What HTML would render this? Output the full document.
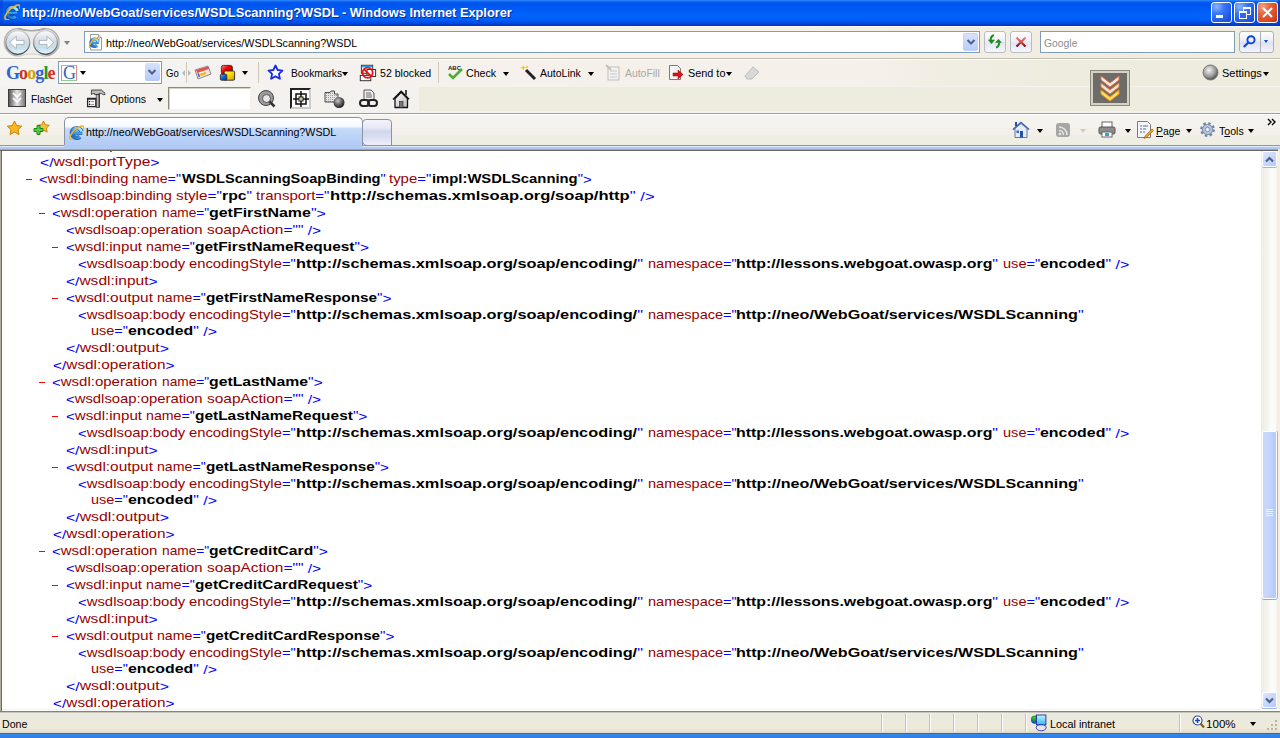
<!DOCTYPE html>
<html><head><meta charset="utf-8">
<style>
*{margin:0;padding:0;box-sizing:border-box}
html,body{width:1280px;height:738px;overflow:hidden;background:#ECE9D8;font-family:"Liberation Sans",sans-serif}
.abs{position:absolute}
.fit{position:absolute;white-space:pre;transform-origin:0 0}
.xl{position:absolute;font-size:13px;line-height:17px;white-space:pre;color:#000}
.xl b{font-weight:bold;color:#000}
.m{color:#0000FF}
.mk{position:relative;top:1px}
.t{color:#990000}
.b{color:#FF0000;font-family:"Liberation Mono",monospace;font-weight:bold}
.ui{font-size:11px;line-height:13px;color:#000}
#title{left:0;top:0;width:1280px;height:26px;background:linear-gradient(#2E8BFF 0px,#0A5CEB 2px,#0053EE 4px,#005BF5 9px,#0063FB 15px,#005DF7 20px,#004BE0 23px,#0039C8 25px,#0034BC 26px)}
.ttext{font-size:13px;line-height:16px;font-weight:bold;color:#fff;text-shadow:1px 1px 0 #0B2A9C}
.wbtn{position:absolute;top:2px;width:21px;height:21px;border:1px solid #fff;border-radius:3px;background:radial-gradient(circle at 25% 20%,#8FB4FF 0,#3A76F5 35%,#1F58E4 75%,#1845C8 100%)}
.wclose{background:radial-gradient(circle at 25% 20%,#F3A184 0,#E5643C 35%,#D9471B 75%,#B8360E 100%)}
#nav{left:0;top:26px;width:1280px;height:33px;background:linear-gradient(#FCFAF2 0,#FCFAF2 1px,transparent 1px),linear-gradient(90deg,#F4F4F3 0,#F4F3F1 200px,#F6F1EA 500px,#F6F0E8 800px,#F2EEE3 1000px,#EEEBDF 1280px)}
.addr{position:absolute;background:#fff;border:1px solid #7F9DB9}
#gtb{left:0;top:59px;width:1280px;height:27px;background:linear-gradient(#FFFFFF 0,#FFFFFF 1px,transparent 1px),linear-gradient(90deg,#F4F4F3 0,#F5F2EF 300px,#F6F0EA 600px,#F6F0EA 860px,#F0EDE2 960px,#EEEBDF 1060px)}
#ftb{left:0;top:86px;width:1280px;height:27px;background:#F4F2EE}
#tabs{left:0;top:113px;width:1280px;height:38px}
#content{left:0;top:151px;width:1261px;height:560px;background:#fff;overflow:hidden}
#status{left:0;top:711px;width:1280px;height:23px}
.sep{position:absolute;width:2px;height:18px;top:3px;border-left:1px solid #C5C2B2;border-right:1px solid #fff}
.arr{position:absolute;width:0;height:0;border-left:3.5px solid transparent;border-right:3.5px solid transparent;border-top:4px solid #000}
</style></head><body>
<svg width="0" height="0" style="position:absolute"><defs>
<linearGradient id="ieg" x1="0" y1="0" x2="0" y2="1"><stop offset="0" stop-color="#9DE6FF"/><stop offset=".5" stop-color="#3AB0F0"/><stop offset="1" stop-color="#1A70D0"/></linearGradient>
<g id="ie">
<circle cx="8.8" cy="9" r="4.9" stroke="#0D3C8C" stroke-opacity=".75" stroke-width="4.4" fill="none" stroke-dasharray="24.5 6.3" transform="rotate(50 8.8 9)"/>
<rect x="3.9" y="7.6" width="10.4" height="3.3" fill="#0D3C8C" fill-opacity=".75"/>
<circle cx="8.8" cy="9" r="4.9" stroke="url(#ieg)" stroke-width="2.8" fill="none" stroke-dasharray="24.5 6.3" transform="rotate(50 8.8 9)"/>
<rect x="4.5" y="8.2" width="9.2" height="2" fill="#30A8EE"/>
<path d="M6 15.6C2.6 16.8 0.9 14.8 2.4 11.6 4.3 7.6 8.8 3.6 12.8 2.2 15.4 1.4 16.6 2.4 15.5 5.2" stroke="#F2B422" stroke-width="1.6" fill="none"/>
</g></defs></svg>

<!-- TITLE BAR -->
<div id="title" class="abs">
  <div class="abs" style="left:0;top:0;width:3px;height:26px;background:#0B3FCB;opacity:.5"></div>
  <svg class="abs" style="left:3px;top:3px" width="17" height="17" viewBox="0 0 16 16"><use href="#ie"/></svg>
  <div class="fit ttext" style="left:22.0px;top:5.0px;;transform:scaleX(0.9839)">http://neo/WebGoat/services/WSDLScanning?WSDL - Windows Internet Explorer</div>
  <div class="wbtn" style="left:1211px"><div class="abs" style="left:4px;top:12px;width:7px;height:3px;background:#fff"></div></div>
  <div class="wbtn" style="left:1234px">
    <div class="abs" style="left:8px;top:4px;width:8px;height:8px;border:1px solid #fff;border-top-width:2px"></div>
    <div class="abs" style="left:4px;top:8px;width:8px;height:8px;border:1px solid #fff;border-top-width:2px;background:#2E67EC"></div>
  </div>
  <div class="wbtn wclose" style="left:1257px">
    <svg class="abs" style="left:3px;top:3px" width="13" height="13" viewBox="0 0 13 13"><path d="M2 2L11 11M11 2L2 11" stroke="#fff" stroke-width="2"/></svg>
  </div>
  <div class="abs" style="left:1278px;top:0;width:2px;height:26px;background:#0030B0;opacity:.6"></div>
</div>

<!-- NAV BAR -->
<div id="nav" class="abs">
  <svg class="abs" style="left:2px;top:0" width="60" height="32" viewBox="0 0 60 32">
    <defs>
      <linearGradient id="bf" x1="0" y1="0" x2="0" y2="1"><stop offset="0" stop-color="#FAFCFE"/><stop offset=".45" stop-color="#D5DCE6"/><stop offset=".7" stop-color="#C6DEEC"/><stop offset="1" stop-color="#E2F6FD"/></linearGradient>
      <linearGradient id="bs" x1="0" y1="0" x2="0" y2="1"><stop offset="0" stop-color="#D0D0D0"/><stop offset=".5" stop-color="#9A9A9A"/><stop offset="1" stop-color="#4A4A4A"/></linearGradient>
    </defs>
    <circle cx="16" cy="16.2" r="13.6" fill="#ECECEC" stroke="#B2B2B2" stroke-width="1.4"/>
    <circle cx="43.5" cy="16.2" r="13.6" fill="#ECECEC" stroke="#B2B2B2" stroke-width="1.4"/>
    <rect x="16" y="4" width="27.5" height="25" fill="#ECECEC"/>
    <path d="M16 2.6Q29.75 7 43.5 2.6" stroke="#A8A8A8" stroke-width="1.6" fill="none"/>
    <path d="M16 29.8Q29.75 26.5 43.5 29.8" stroke="#D8D8D8" stroke-width="1.2" fill="none"/>
    <circle cx="15.8" cy="16.4" r="11.9" fill="url(#bf)" stroke="url(#bs)" stroke-width="1.3"/>
    <circle cx="43.5" cy="16.4" r="11.9" fill="url(#bf)" stroke="url(#bs)" stroke-width="1.3"/>
    <path d="M7.7 16.4L14.3 10.2V14.4H22V18.4H14.3V22.8Z" fill="#fff" stroke="#A0A6AE" stroke-width=".8" stroke-linejoin="round"/>
    <path d="M51.6 16.4L45 10.2V14.4H37.3V18.4H45V22.8Z" fill="#fff" stroke="#A0A6AE" stroke-width=".8" stroke-linejoin="round"/>
  </svg>
  <div class="arr" style="left:64px;top:15px;border-top-color:#808080"></div>
  <div class="addr" style="left:84px;top:5px;width:896px;height:22px"></div>
  <svg class="abs" style="left:88px;top:8px" width="15" height="17" viewBox="0 0 15 17"><path d="M2.5 0.5h8l3 3v12.5h-11z" fill="#fff" stroke="#9A9A9A"/><path d="M10.5 0.5v3h3" fill="#EEE" stroke="#9A9A9A"/></svg><svg class="abs" style="left:88px;top:10px" width="12" height="12" viewBox="0 0 16 16"><use href="#ie"/></svg>
  <div class="fit ui" style="left:105.5px;top:11.0px;;transform:scaleX(0.9767)">http://neo/WebGoat/services/WSDLScanning?WSDL</div>
  <div class="abs" style="left:963px;top:7px;width:15px;height:18px;border-radius:2px;background:linear-gradient(#D6E2FD,#B9CDFB);border:1px solid #C1D3FB"></div>
  <svg class="abs" style="left:966px;top:12px" width="10" height="8" viewBox="0 0 10 8"><path d="M1.5 2L5 5.5 8.5 2" stroke="#4D6185" stroke-width="2" fill="none"/></svg>
  <div class="abs" style="left:984px;top:5px;width:22px;height:22px;border-radius:3px;border:1px solid #B9BCC6;background:linear-gradient(#FFFFFF,#EEEFF8 45%,#E2E5F4 55%,#F6F6FB)"></div>
  <svg class="abs" style="left:984px;top:5px" width="22" height="22" viewBox="0 0 22 22"><path d="M3.9 8.7H11.1L7.5 12.9Z" fill="#1E8A1E"/><path d="M6.6 9C6.8 6 8 4.5 10 4.2" stroke="#1E8A1E" stroke-width="2" fill="none"/><path d="M10.9 11.7H18L14.5 7.9Z" fill="#1E8A1E"/><path d="M15.3 11.5C15 14.5 14 16 12 16.5" stroke="#1E8A1E" stroke-width="2" fill="none"/></svg>
  <div class="abs" style="left:1010px;top:5px;width:22px;height:22px;border-radius:3px;border:1px solid #B9BCC6;background:linear-gradient(#FFFFFF,#EEEFF8 45%,#E2E5F4 55%,#F6F6FB)"></div>
  <svg class="abs" style="left:1010px;top:5px" width="22" height="22" viewBox="0 0 22 22"><defs><linearGradient id="xr" x1="0" y1="0" x2="0" y2="1"><stop offset="0" stop-color="#F08080"/><stop offset=".5" stop-color="#D84A4A"/><stop offset="1" stop-color="#7A0A0A"/></linearGradient></defs><path d="M6.5 6.5L15.5 15.5M15.5 6.5L6.5 15.5" stroke="url(#xr)" stroke-width="2.2"/></svg>
  <div class="addr" style="left:1040px;top:5px;width:195px;height:22px"></div>
  <div class="fit ui" style="left:1043.5px;top:11.0px;;transform:scaleX(0.9429)"><span style="color:#8D8D8D">Google</span></div>
  <div class="abs" style="left:1239px;top:5px;width:35px;height:22px;border-radius:3px;border:1px solid #ACB1BB;background:linear-gradient(#FFFFFF,#EEEFF6 40%,#DEE2F0 55%,#F4F4FA)"></div>
  <div class="abs" style="left:1260px;top:6px;width:1px;height:20px;background:#A8ADB6"></div>
  <svg class="abs" style="left:1239px;top:5px" width="22" height="22" viewBox="0 0 22 22"><circle cx="12" cy="8.8" r="3.6" stroke="#0A44E0" stroke-width="1.9" fill="none"/><path d="M9.3 11.5L4.8 16" stroke="#0A44E0" stroke-width="2.2"/></svg>
  <div class="arr" style="left:1264px;top:14px;border-top-color:#0A44E0;border-left-width:2.6px;border-right-width:2.6px;border-top-width:3px"></div>
  <div class="abs" style="left:0;top:32px;width:1280px;height:1px;background:#C0BDB0"></div>
</div>

<!-- GOOGLE TOOLBAR -->
<div id="gtb" class="abs">
  <div class="abs" style="left:6px;top:4px;font-family:'Liberation Serif',serif;font-weight:bold;font-size:18px;line-height:20px;letter-spacing:-0.9px">
    <span style="color:#2F62D6">G</span><span style="color:#D0321E">o</span><span style="color:#D2A200">o</span><span style="color:#2F62D6">g</span><span style="color:#1E9A30">l</span><span style="color:#D0321E">e</span></div>
  <div class="addr" style="left:58px;top:2px;width:104px;height:23px;background:#fff"></div>
  <div class="abs" style="left:61px;top:6px;width:16px;height:16px;border:1px solid #8FCF8F;border-left-color:#9A9AE8;border-right-color:#E08888;overflow:hidden;font-family:'Liberation Serif',serif;font-size:18px;line-height:15px;color:#3560C8;text-align:center;letter-spacing:-1px">G</div>
  <div class="arr" style="left:80px;top:12px"></div>
  <div class="abs" style="left:145px;top:4px;width:15px;height:18px;background:linear-gradient(#D6E2FD,#B5CAFA);border-radius:2px"></div>
  <svg class="abs" style="left:147px;top:9px" width="10" height="8" viewBox="0 0 10 8"><path d="M1.5 2L5 5.5 8.5 2" stroke="#4D6185" stroke-width="2" fill="none"/></svg>
  <div class="fit ui" style="left:165.5px;top:8.0px;;transform:scaleX(0.8667)">Go</div>
  <svg class="abs" style="left:182px;top:10px" width="9" height="8" viewBox="0 0 9 8"><path d="M0 4l3-3v6zM9 4L6 1v6z" fill="#B8B8B8"/></svg>
  <div class="abs" style="left:186px;top:3px;width:1px;height:21px;background:#CFC9B6"></div>
  <svg class="abs" style="left:194px;top:6px" width="18" height="15" viewBox="0 0 18 15"><path d="M1 5l13-4 3 8-13 5z" fill="#F6E8D8" stroke="#8A8A8A"/><path d="M2 5l12-3.5 1 2.5-12 4z" fill="#E85050"/><rect x="6" y="8" width="6" height="2" fill="#F4B400" transform="rotate(-18 9 9)"/><rect x="4" y="8" width="1.5" height="4" fill="#3060D0" transform="rotate(-18 5 10)"/></svg>
  <svg class="abs" style="left:219px;top:5px" width="18" height="18" viewBox="0 0 18 18"><defs><linearGradient id="cr" x1="0" y1="0" x2="1" y2="1"><stop offset="0" stop-color="#FF9090"/><stop offset=".4" stop-color="#F00000"/><stop offset="1" stop-color="#A00000"/></linearGradient><linearGradient id="cy" x1="0" y1="0" x2="1" y2="1"><stop offset="0" stop-color="#FFFFA0"/><stop offset=".4" stop-color="#FFE800"/><stop offset="1" stop-color="#D09000"/></linearGradient><linearGradient id="cb" x1="0" y1="0" x2="1" y2="1"><stop offset="0" stop-color="#70B0FF"/><stop offset=".5" stop-color="#1060E0"/><stop offset="1" stop-color="#0030A0"/></linearGradient></defs><rect x="2.4" y="1.4" width="11" height="9.2" rx="2" fill="url(#cr)" stroke="#2A2A2A" stroke-width=".9"/><rect x="5.2" y="7" width="10.4" height="9.2" rx="1.2" fill="url(#cy)" stroke="#2A2A2A" stroke-width=".9"/><rect x="1.4" y="10.2" width="6.4" height="6" rx="1" fill="url(#cb)" stroke="#2A2A2A" stroke-width=".9"/></svg>
  <div class="arr" style="left:242px;top:12px"></div>
  <div class="abs" style="left:258px;top:3px;width:1px;height:21px;background:#CFC9B6"></div>
  <svg class="abs" style="left:267px;top:5px" width="17" height="17" viewBox="0 0 17 17"><path d="M8.5 1.5l2.1 4.5 4.9.6-3.6 3.3 1 4.9-4.4-2.4-4.4 2.4 1-4.9-3.6-3.3 4.9-.6z" fill="#fff" stroke="#1A2BE8" stroke-width="1.8" stroke-linejoin="round"/></svg>
  <div class="fit ui" style="left:290.6px;top:8.0px;;transform:scaleX(0.9273)">Bookmarks</div>
  <div class="arr" style="left:342px;top:13px"></div>
  <svg class="abs" style="left:358px;top:5px" width="20" height="18" viewBox="0 0 20 18"><rect x="3.4" y="1.3" width="11.3" height="8" fill="#fff" stroke="#333" stroke-width="1"/><rect x="3.9" y="1.8" width="10.3" height="1.5" fill="#2AA0F0"/><rect x="9" y="5.5" width="8.6" height="7" fill="#fff" stroke="#333" stroke-width="1"/><rect x="2.3" y="11.4" width="10.5" height="5.3" fill="#fff" stroke="#333" stroke-width="1"/><circle cx="9.6" cy="8.7" r="5.1" stroke="#F01010" stroke-width="1.8" fill="none"/><path d="M6 5.1L13.2 12.3" stroke="#F01010" stroke-width="1.8"/></svg>
  <div class="fit ui" style="left:379.7px;top:8.0px;;transform:scaleX(0.9623)">52 blocked</div>
  <div class="abs" style="left:438px;top:3px;width:1px;height:21px;background:#CFC9B6"></div>
  <svg class="abs" style="left:447px;top:5px" width="17" height="17" viewBox="0 0 17 17"><text x="1" y="6" font-family="Liberation Sans" font-size="6" font-weight="bold" fill="#222">ABC</text><path d="M2 10l4 4 9-9" stroke="#4CAF30" stroke-width="2.6" fill="none"/></svg>
  <div class="fit ui" style="left:466.4px;top:8.0px;;transform:scaleX(0.9677)">Check</div>
  <div class="arr" style="left:503px;top:13px"></div>
  <svg class="abs" style="left:520px;top:5px" width="17" height="17" viewBox="0 0 17 17"><path d="M6 6l9 9" stroke="#222" stroke-width="3"/><path d="M3 1l1 2 2 .5-2 1-.5 2-1-2-2-.5 2-1z" fill="#F4C400"/><circle cx="7" cy="3" r="1" fill="#F4C400"/></svg>
  <div class="fit ui" style="left:540.0px;top:8.0px;;transform:scaleX(0.9535)">AutoLink</div>
  <div class="arr" style="left:588px;top:13px"></div>
  <svg class="abs" style="left:605px;top:5px" width="16" height="17" viewBox="0 0 16 17"><rect x="3" y="3" width="11" height="13" fill="#F2F2F0" stroke="#BDBDBD"/><path d="M5 7h7M5 10h7M5 13h7" stroke="#C8C8C8"/><path d="M1 1l5 5" stroke="#C0C0C0" stroke-width="2"/></svg>
  <div class="fit ui" style="left:624.7px;top:8.0px;;transform:scaleX(0.9459)"><span style="color:#A8A8A8">AutoFill</span></div>
  <svg class="abs" style="left:668px;top:5px" width="17" height="17" viewBox="0 0 17 17"><path d="M1.5 1.5h8l3 3v11h-11z" fill="#F6F6F6" stroke="#7A7A7A"/><path d="M5 9h5V6l5 4.5-5 4.5v-3H5z" fill="#E0101A" stroke="#900" stroke-width=".5"/></svg>
  <div class="fit ui" style="left:687.6px;top:8.0px;;transform:scaleX(0.9868)">Send to</div>
  <div class="arr" style="left:726px;top:13px"></div>
  <svg class="abs" style="left:744px;top:6px" width="16" height="15" viewBox="0 0 16 15"><path d="M1 11l8-9 6 5-7 7H3z" fill="#D8D8D8" stroke="#BCBCBC"/></svg>
  <!-- right -->
  <svg class="abs" style="left:1202px;top:5px" width="17" height="17" viewBox="0 0 17 17"><defs><radialGradient id="sg" cx="40%" cy="35%" r="60%"><stop offset="0" stop-color="#F4F4F4"/><stop offset=".7" stop-color="#9A9A9A"/><stop offset="1" stop-color="#5E5E5E"/></radialGradient></defs><circle cx="8.5" cy="8.5" r="7.5" fill="url(#sg)" stroke="#777"/></svg>
  <div class="fit ui" style="left:1222.0px;top:8.0px;;transform:scaleX(1.0000)">Settings</div>
  <div class="arr" style="left:1263px;top:13px"></div>
</div>

<!-- FLASHGET TOOLBAR -->
<div id="ftb" class="abs">
  <div class="abs" style="left:419px;top:1px;width:861px;height:24px;background:#EEEBDF"></div>
  <div class="abs" style="left:8px;top:3px;width:18px;height:18px;background:linear-gradient(90deg,#5A5A5A,#E6E6E6 50%,#7A7A7A);border:1px solid #3C3C3C"></div>
  <svg class="abs" style="left:11px;top:6px" width="12" height="12" viewBox="0 0 12 12"><path d="M2 1l4 4 4-4M2 6l4 4 4-4" stroke="#fff" stroke-width="1.6" fill="none"/></svg>
  <div class="fit ui" style="left:30.5px;top:7.0px;;transform:scaleX(0.9222)">FlashGet</div>
  <svg class="abs" style="left:84px;top:0" width="26" height="26" viewBox="0 0 26 26"><defs><linearGradient id="hm" x1="0" y1="0" x2="1" y2="0"><stop offset="0" stop-color="#F4F4F4"/><stop offset=".5" stop-color="#A8A8A8"/><stop offset="1" stop-color="#3A3A3A"/></linearGradient></defs>
  <path d="M7.5 4H17.5L21 7.3V8.6H19.2L17.6 7.6H14.8V8.6H10.6V7.6H8.8L7.3 8.6Z" fill="#BDBDBD" stroke="#2A2A2A" stroke-width=".8" stroke-linejoin="round"/>
  <rect x="12.2" y="8.6" width="3.4" height="12.8" fill="url(#hm)" stroke="#222" stroke-width=".7"/>
  <rect x="3.6" y="12.4" width="8.2" height="8.2" fill="#fff" stroke="#262626" stroke-width="1.3"/>
  <rect x="3.6" y="12.4" width="8.2" height="1.3" fill="#262626"/>
  <circle cx="5.6" cy="15.6" r=".8" fill="#111"/><circle cx="5.6" cy="18.4" r=".8" fill="#111"/>
  <path d="M7.2 15.6H10M7.2 18.4H10" stroke="#777" stroke-width=".9"/></svg>
  <div class="fit ui" style="left:109.7px;top:7.0px;;transform:scaleX(0.9474)">Options</div>
  <div class="arr" style="left:157px;top:12px"></div>
  <div class="abs" style="left:168px;top:1px;width:83px;height:23px;background:#fff;border:1px solid;border-color:#8E8B7C #F6F4EA #F6F4EA #8E8B7C;box-shadow:inset 1px 1px 0 #D6D3C6"></div>
  <svg class="abs" style="left:257px;top:3px" width="20" height="20" viewBox="0 0 20 20"><circle cx="9" cy="9" r="7.5" fill="#9A9A9A" stroke="#444"/><circle cx="9.5" cy="9.5" r="4" fill="#E8E8E8" stroke="#555"/><path d="M12.5 12.5l5 5" stroke="#333" stroke-width="2.5"/></svg>
  <div class="abs" style="left:290px;top:2px;width:21px;height:21px;background:#fff;border:2px solid #222;border-right-color:#ccc;border-bottom-color:#ccc"></div>
  <svg class="abs" style="left:293px;top:5px" width="16" height="16" viewBox="0 0 16 16"><rect x="3" y="3" width="10" height="10" fill="none" stroke="#111" stroke-width="1.5"/><path d="M8 0v16M0 8h16" stroke="#111" stroke-width="1.5"/><rect x="6" y="6" width="4" height="4" fill="#fff" stroke="#111"/><rect x="7.2" y="7.2" width="1.6" height="1.6" fill="#C8A000"/></svg>
  <svg class="abs" style="left:324px;top:3px" width="22" height="20" viewBox="0 0 22 20"><defs><radialGradient id="gl" cx="40%" cy="35%" r="65%"><stop offset="0" stop-color="#C8C8C8"/><stop offset=".6" stop-color="#5A5A5A"/><stop offset="1" stop-color="#222"/></radialGradient><pattern id="ht" width="2" height="2" patternUnits="userSpaceOnUse"><rect width="2" height="2" fill="#E6E6E6"/><rect width="1" height="1" fill="#9A9A9A"/></pattern></defs><path d="M1 3.5H6L7 2H10.5V5H14V13H1Z" fill="url(#ht)" stroke="#3A3A3A" stroke-width=".9" stroke-linejoin="round"/><circle cx="15" cy="13.5" r="5.5" fill="url(#gl)"/></svg>
  <svg class="abs" style="left:359px;top:3px" width="20" height="20" viewBox="0 0 20 20"><path d="M5 1h7l3 3v7H5z" fill="#F0F0F0" stroke="#555"/><path d="M7 4h5M7 6h6M7 8h6" stroke="#666"/><rect x="1" y="11" width="9" height="6" rx="3" fill="none" stroke="#222" stroke-width="2"/><rect x="9" y="11" width="9" height="6" rx="3" fill="none" stroke="#222" stroke-width="2"/></svg>
  <svg class="abs" style="left:392px;top:3px" width="18" height="20" viewBox="0 0 18 20"><defs><linearGradient id="hs" x1="0" y1="0" x2="1" y2="1"><stop offset="0" stop-color="#FFFFFF"/><stop offset="1" stop-color="#B8B8B8"/></linearGradient></defs><path d="M3 9.5V18.5H15.5V9.5L9.2 3.2Z" fill="url(#hs)" stroke="#111" stroke-width="1.3" stroke-linejoin="round"/><path d="M1 10.5L9.2 2.3 17 10.3" stroke="#111" stroke-width="1.5" fill="none"/><rect x="13" y="1" width="2" height="5.5" fill="#444"/><rect x="7.5" y="12.5" width="3.5" height="6" fill="#777" stroke="#222" stroke-width=".6"/></svg>
  <!-- flashget logo -->
  <div class="abs" style="left:1091px;top:-15px;width:38px;height:34px;background:#6E6C68;border:2px solid #D4D0C4;outline:1px solid #8E8B80"></div>
  <svg class="abs" style="left:1098px;top:-12px" width="24" height="28" viewBox="0 0 24 28"><path d="M3 2l9 7 9-7v4l-9 7-9-7z" fill="#FBE8E0" stroke="#E07050"/><path d="M3 9l9 7 9-7v4l-9 7-9-7z" fill="#FBE0D0" stroke="#E08040"/><path d="M3 16l9 7 9-7v4l-9 7-9-7z" fill="#F8E060" stroke="#F09020"/></svg>
</div>

<!-- TAB BAR -->
<div id="tabs" class="abs">
  <div class="abs" style="left:0;top:0;width:1280px;height:1px;background:#A5A08E"></div>
  <div class="abs" style="left:0;top:1px;width:1280px;height:1px;background:#FFFFFF"></div>
  <div class="abs" style="left:0;top:2px;width:1280px;height:30px;background:linear-gradient(#F5F3EE 0,#F5F3EE 13px,#F5EFE9 13px,#F5EFE9 20px,#EFEEE6 20px,#EFEEE6 27px,#F0EEE1 27px)"></div>
  <svg class="abs" style="left:6px;top:7px" width="17" height="16" viewBox="0 0 17 16"><path d="M8.5 1l2.2 4.6 5 .6-3.7 3.4 1 5-4.5-2.5-4.5 2.5 1-5L1.3 6.2l5-.6z" fill="#F8B820" stroke="#C88400" stroke-linejoin="round"/></svg>
  <svg class="abs" style="left:33px;top:7px" width="17" height="16" viewBox="0 0 17 16"><path d="M10.5 1l1.8 3.8 4 .5-3 2.8.8 4-3.6-2-3.6 2 .8-4-3-2.8 4-.5z" fill="#F8C040" stroke="#C88400" stroke-linejoin="round"/><path d="M4 5.5h3v3h3v3H7v3H4v-3H1v-3h3z" fill="#58C848" stroke="#1C8A10"/></svg>
  <div class="abs" style="left:0;top:32px;width:1280px;height:1px;background:#8F97A8"></div>

  <!-- right tools -->
  <svg class="abs" style="left:1012px;top:8px" width="18" height="17" viewBox="0 0 18 17"><path d="M1 8.5L9 1.5l8 7" stroke="#3C5FA8" stroke-width="1.6" fill="#9DB9E8"/><path d="M3 7.5v9h12v-9L9 2.5z" fill="#E4ECF8" stroke="#5A78B0"/><rect x="8" y="10" width="3" height="6.5" fill="#2A50A8"/><rect x="4.5" y="9.5" width="2.5" height="2.5" fill="#3A66C8"/><rect x="3" y="1" width="2" height="4" fill="#2A50A8"/></svg>
  <div class="arr" style="left:1037px;top:16px"></div>
  <div class="abs" style="left:1056px;top:10px;width:14px;height:14px;border-radius:3px;background:#A6A6A2"></div>
  <svg class="abs" style="left:1058px;top:12.5px" width="10" height="10" viewBox="0 0 10 10"><circle cx="2" cy="8" r="1.3" fill="#E8E8E8"/><path d="M1 4.5a4.5 4.5 0 0 1 4.5 4.5M1 1a8 8 0 0 1 8 8" stroke="#E8E8E8" stroke-width="1.5" fill="none"/></svg>
  <div class="arr" style="left:1080px;top:16px;border-top-color:#CFCCC2"></div>
  <svg class="abs" style="left:1098px;top:8px" width="18" height="17" viewBox="0 0 18 17"><rect x="4" y="1" width="10" height="6" fill="#fff" stroke="#666"/><rect x="1" y="6" width="16" height="7" rx="1.5" fill="#8C8C8C" stroke="#555"/><rect x="4" y="11" width="10" height="5" fill="#fff" stroke="#666"/><rect x="7" y="12" width="4" height="3" fill="#36A0D8"/></svg>
  <div class="arr" style="left:1125px;top:16px"></div>
  <svg class="abs" style="left:1136px;top:7px" width="18" height="19" viewBox="0 0 18 19"><path d="M1.5 1.5h10l3 3V17.5h-13z" fill="#F6F6F6" stroke="#7A7A7A"/><path d="M4 6h2M7 6h5M4 9h2M7 9h3M4 12h2M7 12h2" stroke="#4A6AB0"/><path d="M9 16l7-7 1.5 1.5-7 7-2.5 1z" fill="#F0A020" stroke="#8A5A10" stroke-width=".6"/></svg>
  <div class="fit ui" style="left:1156.4px;top:12.0px;;transform:scaleX(0.9423)"><u>P</u>age</div>
  <div class="arr" style="left:1186px;top:16px"></div>
  <svg class="abs" style="left:1199px;top:8px" width="17" height="17" viewBox="0 0 17 17"><circle cx="8.5" cy="8.5" r="5.8" fill="#A9BCD6" stroke="#6F86A8" stroke-width="3.2" stroke-dasharray="2.3 2.25"/><circle cx="8.5" cy="8.5" r="5" fill="#B8C8DE" stroke="#7990B2"/><circle cx="8.5" cy="8.5" r="2.2" fill="#EEF2F8" stroke="#7990B2"/></svg>
  <div class="fit ui" style="left:1218.8px;top:12.0px;;transform:scaleX(0.9615)">T<u>o</u>ols</div>
  <div class="arr" style="left:1248px;top:16px"></div>
  <svg class="abs" style="left:1267px;top:5px" width="10" height="8" viewBox="0 0 10 8"><path d="M1 1l3 3-3 3M5 1l3 3-3 3" stroke="#000" stroke-width="1.4" fill="none"/></svg>
  <div class="abs" style="left:0;top:33px;width:1280px;height:1px;background:#E0E9FB"></div>
  <div class="abs" style="left:0;top:34px;width:1280px;height:2px;background:#B3C8F3"></div>
  <div class="abs" style="left:0;top:36px;width:1278px;height:1px;background:#ABA892"></div>
  <div class="abs" style="left:0;top:37px;width:1278px;height:1px;background:#6E6B5E"></div>
  <div class="abs" style="left:362px;top:6px;width:30px;height:27px;border:1px solid #8A93A4;border-radius:4px 4px 0 5px;background:linear-gradient(#F4F3FC,#E8E9F6 30%,#D2D7EC 45%,#DCDFF2 70%,#F0F0FA)"></div>
  <div class="abs" style="left:64px;top:4px;width:299px;height:29px;border:1px solid #8A93A4;border-bottom:none;border-radius:5px 5px 0 0;background:linear-gradient(#FFFFFF 0,#F4F8FF 9px,#C9DDFA 10px,#BCD4F8 60%,#B3CBF6 100%)"></div>
  <div class="abs" style="left:64px;top:32px;width:298px;height:4px;background:#B1C9F5"></div>
  <svg class="abs" style="left:68px;top:11px" width="16" height="16" viewBox="0 0 16 16"><use href="#ie"/></svg>
  <div class="fit ui" style="left:86.0px;top:13.0px;;transform:scaleX(0.9728)">http://neo/WebGoat/services/WSDLScanning?WSDL</div>
</div>

<!-- CONTENT -->
<div id="content" class="abs">
  <div class="abs" style="left:0;top:0;width:1px;height:560px;background:#B2AF9E"></div>
  <div class="abs" style="left:1px;top:0;width:1px;height:560px;background:#716B5D"></div>
  <div class="abs" style="left:0;top:0;width:1261px;height:560px;transform:translateY(-151px)">
<div class="fit xl" style="left:39.5px;top:153px;;transform:scaleX(1.2071)"><span class="m mk">&lt;</span><span class="m mk">/</span><span class="t">wsdl:portType</span><span class="m mk">&gt;</span></div>
<div class="abs" style="left:26px;top:179px;width:6px;height:1px;background:#f00;transform:translateX(0px)"></div>
<div class="fit xl" style="left:38.5px;top:170px;;transform:scaleX(1.1295)"><span class="m mk">&lt;</span><span class="t">wsdl:binding</span> </div>
<div class="fit xl" style="left:132.25px;top:170px;;transform:scaleX(1.0944)"><span class="t">name</span><span class="m">="</span></div>
<div class="fit xl" style="left:181.5px;top:170px;;transform:scaleX(1.1216)"><b>WSDLScanningSoapBinding</b><span class="m">"</span> </div>
<div class="fit xl" style="left:389.0px;top:170px;;transform:scaleX(1.1486)"><span class="t">type</span><span class="m">="</span></div>
<div class="fit xl" style="left:431.5px;top:170px;;transform:scaleX(1.1393)"><b>impl:WSDLScanning</b><span class="m">"</span><span class="m mk">&gt;</span></div>
<div class="fit xl" style="left:52.0px;top:187px;;transform:scaleX(1.1171)"><span class="m mk">&lt;</span><span class="t">wsdlsoap:binding</span> </div>
<div class="fit xl" style="left:176.0px;top:187px;;transform:scaleX(1.1795)"><span class="t">style</span><span class="m">="</span></div>
<div class="fit xl" style="left:222.0px;top:187px;;transform:scaleX(1.2143)"><b>rpc</b><span class="m">"</span> </div>
<div class="fit xl" style="left:256.0px;top:187px;;transform:scaleX(1.1562)"><span class="t">transport</span><span class="m">="</span></div>
<div class="fit xl" style="left:330.0px;top:187px;;transform:scaleX(1.2768)"><b>http://schemas.xmlsoap.org/soap/http</b><span class="m">"</span> <span class="m mk">/</span><span class="m mk">&gt;</span></div>
<div class="abs" style="left:26px;top:213px;width:6px;height:1px;background:#f00;transform:translateX(13px)"></div>
<div class="fit xl" style="left:52.0px;top:204px;;transform:scaleX(1.1526)"><span class="m mk">&lt;</span><span class="t">wsdl:operation</span> </div>
<div class="fit xl" style="left:161.5px;top:204px;;transform:scaleX(1.0556)"><span class="t">name</span><span class="m">="</span></div>
<div class="fit xl" style="left:209.0px;top:204px;;transform:scaleX(1.2263)"><b>getFirstName</b><span class="m">"</span><span class="m mk">&gt;</span></div>
<div class="fit xl" style="left:66.0px;top:221px;;transform:scaleX(1.1423)"><span class="m mk">&lt;</span><span class="t">wsdlsoap:operation</span> </div>
<div class="fit xl" style="left:206.5px;top:221px;;transform:scaleX(1.1875)"><span class="t">soapAction</span><span class="m">=""</span> <span class="m mk">/</span><span class="m mk">&gt;</span></div>
<div class="abs" style="left:26px;top:247px;width:6px;height:1px;background:#f00;transform:translateX(26px)"></div>
<div class="fit xl" style="left:65.7px;top:238px;;transform:scaleX(1.1623)"><span class="m mk">&lt;</span><span class="t">wsdl:input</span> </div>
<div class="fit xl" style="left:145.9px;top:238px;;transform:scaleX(1.0911)"><span class="t">name</span><span class="m">="</span></div>
<div class="fit xl" style="left:195.0px;top:238px;;transform:scaleX(1.1871)"><b>getFirstNameRequest</b><span class="m">"</span><span class="m mk">&gt;</span></div>
<div class="fit xl" style="left:78.4px;top:255px;;transform:scaleX(1.1443)"><span class="m mk">&lt;</span><span class="t">wsdlsoap:body</span> </div>
<div class="fit xl" style="left:189.4px;top:255px;;transform:scaleX(1.1372)"><span class="t">encodingStyle</span><span class="m">="</span></div>
<div class="fit xl" style="left:296.3px;top:255px;;transform:scaleX(1.2561)"><b>http://schemas.xmlsoap.org/soap/encoding/</b><span class="m">"</span> </div>
<div class="fit xl" style="left:648.0px;top:255px;;transform:scaleX(1.1165)"><span class="t">namespace</span><span class="m">="</span></div>
<div class="fit xl" style="left:736.2px;top:255px;;transform:scaleX(1.2239)"><b>http://lessons.webgoat.owasp.org</b><span class="m">"</span> </div>
<div class="fit xl" style="left:1003.0px;top:255px;;transform:scaleX(1.1212)"><span class="t">use</span><span class="m">="</span></div>
<div class="fit xl" style="left:1040.0px;top:255px;;transform:scaleX(1.2233)"><b>encoded</b><span class="m">"</span> <span class="m mk">/</span><span class="m mk">&gt;</span></div>
<div class="fit xl" style="left:65.7px;top:272px;;transform:scaleX(1.1948)"><span class="m mk">&lt;</span><span class="m mk">/</span><span class="t">wsdl:input</span><span class="m mk">&gt;</span></div>
<div class="abs" style="left:26px;top:298px;width:6px;height:1px;background:#f00;transform:translateX(26px)"></div>
<div class="fit xl" style="left:65.7px;top:289px;;transform:scaleX(1.1857)"><span class="m mk">&lt;</span><span class="t">wsdl:output</span> </div>
<div class="fit xl" style="left:157.0px;top:289px;;transform:scaleX(1.0889)"><span class="t">name</span><span class="m">="</span></div>
<div class="fit xl" style="left:206.0px;top:289px;;transform:scaleX(1.1783)"><b>getFirstNameResponse</b><span class="m">"</span><span class="m mk">&gt;</span></div>
<div class="fit xl" style="left:78.4px;top:306px;;transform:scaleX(1.1443)"><span class="m mk">&lt;</span><span class="t">wsdlsoap:body</span> </div>
<div class="fit xl" style="left:189.4px;top:306px;;transform:scaleX(1.1372)"><span class="t">encodingStyle</span><span class="m">="</span></div>
<div class="fit xl" style="left:296.3px;top:306px;;transform:scaleX(1.2561)"><b>http://schemas.xmlsoap.org/soap/encoding/</b><span class="m">"</span> </div>
<div class="fit xl" style="left:648.0px;top:306px;;transform:scaleX(1.1165)"><span class="t">namespace</span><span class="m">="</span></div>
<div class="fit xl" style="left:736.2px;top:306px;;transform:scaleX(1.2404)"><b>http://neo/WebGoat/services/WSDLScanning</b><span class="m">"</span></div>
<div class="fit xl" style="left:91.3px;top:322px;;transform:scaleX(1.1121)"><span class="t">use</span><span class="m">="</span></div>
<div class="fit xl" style="left:128.0px;top:322px;;transform:scaleX(1.2192)"><b>encoded</b><span class="m">"</span> <span class="m mk">/</span><span class="m mk">&gt;</span></div>
<div class="fit xl" style="left:65.9px;top:339px;;transform:scaleX(1.2176)"><span class="m mk">&lt;</span><span class="m mk">/</span><span class="t">wsdl:output</span><span class="m mk">&gt;</span></div>
<div class="fit xl" style="left:52.75px;top:356px;;transform:scaleX(1.1830)"><span class="m mk">&lt;</span><span class="m mk">/</span><span class="t">wsdl:operation</span><span class="m mk">&gt;</span></div>
<div class="abs" style="left:26px;top:382px;width:6px;height:1px;background:#f00;transform:translateX(13px)"></div>
<div class="fit xl" style="left:52.0px;top:373px;;transform:scaleX(1.1526)"><span class="m mk">&lt;</span><span class="t">wsdl:operation</span> </div>
<div class="fit xl" style="left:161.5px;top:373px;;transform:scaleX(1.0556)"><span class="t">name</span><span class="m">="</span></div>
<div class="fit xl" style="left:209.0px;top:373px;;transform:scaleX(1.2128)"><b>getLastName</b><span class="m">"</span><span class="m mk">&gt;</span></div>
<div class="fit xl" style="left:66.0px;top:390px;;transform:scaleX(1.1423)"><span class="m mk">&lt;</span><span class="t">wsdlsoap:operation</span> </div>
<div class="fit xl" style="left:206.5px;top:390px;;transform:scaleX(1.1875)"><span class="t">soapAction</span><span class="m">=""</span> <span class="m mk">/</span><span class="m mk">&gt;</span></div>
<div class="abs" style="left:26px;top:416px;width:6px;height:1px;background:#f00;transform:translateX(26px)"></div>
<div class="fit xl" style="left:65.7px;top:407px;;transform:scaleX(1.1623)"><span class="m mk">&lt;</span><span class="t">wsdl:input</span> </div>
<div class="fit xl" style="left:145.9px;top:407px;;transform:scaleX(1.0911)"><span class="t">name</span><span class="m">="</span></div>
<div class="fit xl" style="left:195.0px;top:407px;;transform:scaleX(1.1876)"><b>getLastNameRequest</b><span class="m">"</span><span class="m mk">&gt;</span></div>
<div class="fit xl" style="left:78.4px;top:424px;;transform:scaleX(1.1443)"><span class="m mk">&lt;</span><span class="t">wsdlsoap:body</span> </div>
<div class="fit xl" style="left:189.4px;top:424px;;transform:scaleX(1.1372)"><span class="t">encodingStyle</span><span class="m">="</span></div>
<div class="fit xl" style="left:296.3px;top:424px;;transform:scaleX(1.2561)"><b>http://schemas.xmlsoap.org/soap/encoding/</b><span class="m">"</span> </div>
<div class="fit xl" style="left:648.0px;top:424px;;transform:scaleX(1.1165)"><span class="t">namespace</span><span class="m">="</span></div>
<div class="fit xl" style="left:736.2px;top:424px;;transform:scaleX(1.2239)"><b>http://lessons.webgoat.owasp.org</b><span class="m">"</span> </div>
<div class="fit xl" style="left:1003.0px;top:424px;;transform:scaleX(1.1212)"><span class="t">use</span><span class="m">="</span></div>
<div class="fit xl" style="left:1040.0px;top:424px;;transform:scaleX(1.2233)"><b>encoded</b><span class="m">"</span> <span class="m mk">/</span><span class="m mk">&gt;</span></div>
<div class="fit xl" style="left:65.7px;top:441px;;transform:scaleX(1.1948)"><span class="m mk">&lt;</span><span class="m mk">/</span><span class="t">wsdl:input</span><span class="m mk">&gt;</span></div>
<div class="abs" style="left:26px;top:467px;width:6px;height:1px;background:#f00;transform:translateX(26px)"></div>
<div class="fit xl" style="left:65.7px;top:458px;;transform:scaleX(1.1857)"><span class="m mk">&lt;</span><span class="t">wsdl:output</span> </div>
<div class="fit xl" style="left:157.0px;top:458px;;transform:scaleX(1.0889)"><span class="t">name</span><span class="m">="</span></div>
<div class="fit xl" style="left:206.0px;top:458px;;transform:scaleX(1.1731)"><b>getLastNameResponse</b><span class="m">"</span><span class="m mk">&gt;</span></div>
<div class="fit xl" style="left:78.4px;top:475px;;transform:scaleX(1.1443)"><span class="m mk">&lt;</span><span class="t">wsdlsoap:body</span> </div>
<div class="fit xl" style="left:189.4px;top:475px;;transform:scaleX(1.1372)"><span class="t">encodingStyle</span><span class="m">="</span></div>
<div class="fit xl" style="left:296.3px;top:475px;;transform:scaleX(1.2561)"><b>http://schemas.xmlsoap.org/soap/encoding/</b><span class="m">"</span> </div>
<div class="fit xl" style="left:648.0px;top:475px;;transform:scaleX(1.1165)"><span class="t">namespace</span><span class="m">="</span></div>
<div class="fit xl" style="left:736.2px;top:475px;;transform:scaleX(1.2404)"><b>http://neo/WebGoat/services/WSDLScanning</b><span class="m">"</span></div>
<div class="fit xl" style="left:91.3px;top:491px;;transform:scaleX(1.1121)"><span class="t">use</span><span class="m">="</span></div>
<div class="fit xl" style="left:128.0px;top:491px;;transform:scaleX(1.2192)"><b>encoded</b><span class="m">"</span> <span class="m mk">/</span><span class="m mk">&gt;</span></div>
<div class="fit xl" style="left:65.9px;top:508px;;transform:scaleX(1.2176)"><span class="m mk">&lt;</span><span class="m mk">/</span><span class="t">wsdl:output</span><span class="m mk">&gt;</span></div>
<div class="fit xl" style="left:52.75px;top:525px;;transform:scaleX(1.1830)"><span class="m mk">&lt;</span><span class="m mk">/</span><span class="t">wsdl:operation</span><span class="m mk">&gt;</span></div>
<div class="abs" style="left:26px;top:551px;width:6px;height:1px;background:#f00;transform:translateX(13px)"></div>
<div class="fit xl" style="left:52.0px;top:542px;;transform:scaleX(1.1526)"><span class="m mk">&lt;</span><span class="t">wsdl:operation</span> </div>
<div class="fit xl" style="left:161.5px;top:542px;;transform:scaleX(1.0556)"><span class="t">name</span><span class="m">="</span></div>
<div class="fit xl" style="left:209.0px;top:542px;;transform:scaleX(1.2020)"><b>getCreditCard</b><span class="m">"</span><span class="m mk">&gt;</span></div>
<div class="fit xl" style="left:66.0px;top:559px;;transform:scaleX(1.1423)"><span class="m mk">&lt;</span><span class="t">wsdlsoap:operation</span> </div>
<div class="fit xl" style="left:206.5px;top:559px;;transform:scaleX(1.1875)"><span class="t">soapAction</span><span class="m">=""</span> <span class="m mk">/</span><span class="m mk">&gt;</span></div>
<div class="abs" style="left:26px;top:585px;width:6px;height:1px;background:#f00;transform:translateX(26px)"></div>
<div class="fit xl" style="left:65.7px;top:576px;;transform:scaleX(1.1623)"><span class="m mk">&lt;</span><span class="t">wsdl:input</span> </div>
<div class="fit xl" style="left:145.9px;top:576px;;transform:scaleX(1.0911)"><span class="t">name</span><span class="m">="</span></div>
<div class="fit xl" style="left:195.0px;top:576px;;transform:scaleX(1.1800)"><b>getCreditCardRequest</b><span class="m">"</span><span class="m mk">&gt;</span></div>
<div class="fit xl" style="left:78.4px;top:593px;;transform:scaleX(1.1443)"><span class="m mk">&lt;</span><span class="t">wsdlsoap:body</span> </div>
<div class="fit xl" style="left:189.4px;top:593px;;transform:scaleX(1.1372)"><span class="t">encodingStyle</span><span class="m">="</span></div>
<div class="fit xl" style="left:296.3px;top:593px;;transform:scaleX(1.2561)"><b>http://schemas.xmlsoap.org/soap/encoding/</b><span class="m">"</span> </div>
<div class="fit xl" style="left:648.0px;top:593px;;transform:scaleX(1.1165)"><span class="t">namespace</span><span class="m">="</span></div>
<div class="fit xl" style="left:736.2px;top:593px;;transform:scaleX(1.2239)"><b>http://lessons.webgoat.owasp.org</b><span class="m">"</span> </div>
<div class="fit xl" style="left:1003.0px;top:593px;;transform:scaleX(1.1212)"><span class="t">use</span><span class="m">="</span></div>
<div class="fit xl" style="left:1040.0px;top:593px;;transform:scaleX(1.2233)"><b>encoded</b><span class="m">"</span> <span class="m mk">/</span><span class="m mk">&gt;</span></div>
<div class="fit xl" style="left:65.7px;top:610px;;transform:scaleX(1.1948)"><span class="m mk">&lt;</span><span class="m mk">/</span><span class="t">wsdl:input</span><span class="m mk">&gt;</span></div>
<div class="abs" style="left:26px;top:636px;width:6px;height:1px;background:#f00;transform:translateX(26px)"></div>
<div class="fit xl" style="left:65.7px;top:627px;;transform:scaleX(1.1857)"><span class="m mk">&lt;</span><span class="t">wsdl:output</span> </div>
<div class="fit xl" style="left:157.0px;top:627px;;transform:scaleX(1.0889)"><span class="t">name</span><span class="m">="</span></div>
<div class="fit xl" style="left:206.0px;top:627px;;transform:scaleX(1.1696)"><b>getCreditCardResponse</b><span class="m">"</span><span class="m mk">&gt;</span></div>
<div class="fit xl" style="left:78.4px;top:644px;;transform:scaleX(1.1443)"><span class="m mk">&lt;</span><span class="t">wsdlsoap:body</span> </div>
<div class="fit xl" style="left:189.4px;top:644px;;transform:scaleX(1.1372)"><span class="t">encodingStyle</span><span class="m">="</span></div>
<div class="fit xl" style="left:296.3px;top:644px;;transform:scaleX(1.2561)"><b>http://schemas.xmlsoap.org/soap/encoding/</b><span class="m">"</span> </div>
<div class="fit xl" style="left:648.0px;top:644px;;transform:scaleX(1.1165)"><span class="t">namespace</span><span class="m">="</span></div>
<div class="fit xl" style="left:736.2px;top:644px;;transform:scaleX(1.2404)"><b>http://neo/WebGoat/services/WSDLScanning</b><span class="m">"</span></div>
<div class="fit xl" style="left:91.3px;top:660px;;transform:scaleX(1.1121)"><span class="t">use</span><span class="m">="</span></div>
<div class="fit xl" style="left:128.0px;top:660px;;transform:scaleX(1.2192)"><b>encoded</b><span class="m">"</span> <span class="m mk">/</span><span class="m mk">&gt;</span></div>
<div class="fit xl" style="left:65.9px;top:677px;;transform:scaleX(1.2176)"><span class="m mk">&lt;</span><span class="m mk">/</span><span class="t">wsdl:output</span><span class="m mk">&gt;</span></div>
<div class="fit xl" style="left:52.75px;top:694px;;transform:scaleX(1.1830)"><span class="m mk">&lt;</span><span class="m mk">/</span><span class="t">wsdl:operation</span><span class="m mk">&gt;</span></div>
  </div>
  <div class="abs" style="left:2px;top:558px;width:1259px;height:1px;background:#F8F0EA"></div>
  <div class="abs" style="left:110px;top:0;width:2px;height:1px;background:#D04040"></div>
</div>

<!-- SCROLLBAR -->
<div class="abs" style="left:1261px;top:709px;width:19px;height:2px;background:#fff"></div>
<div class="abs" style="left:1261px;top:151px;width:17px;height:558px;background:linear-gradient(90deg,#EEEDE5,#F3F2EC 30%,#FCFCF9 60%,#FBFAF6 85%,#EDEBE5)"></div>
<div class="abs" style="left:1262px;top:151px;width:15px;height:16px;border-radius:2px;border:1px solid #fff;background:linear-gradient(135deg,#DCE6FE,#C4D5FD 60%,#B5CBFB);box-shadow:0 1px 0 #9DB3E6"></div>
<svg class="abs" style="left:1265px;top:156px" width="9" height="7" viewBox="0 0 9 7"><path d="M1 5.5L4.5 2 8 5.5" stroke="#4D6185" stroke-width="2.2" fill="none"/></svg>
<div class="abs" style="left:1262px;top:431px;width:15px;height:168px;border-radius:2px;border:1px solid #fff;background:linear-gradient(90deg,#CCD8FD,#C6D5FC 40%,#B4C8FB);box-shadow:0 1px 0 #8FA8E0, 1px 0 0 #9DB3E6"></div>
<div class="abs" style="left:1266px;top:509px;width:7px;height:1px;background:#EEF3FF;box-shadow:0 2px 0 #EEF3FF,0 4px 0 #EEF3FF,0 6px 0 #EEF3FF"></div>
<div class="abs" style="left:1262px;top:692px;width:15px;height:16px;border-radius:2px;border:1px solid #fff;background:linear-gradient(135deg,#DCE6FE,#C4D5FD 60%,#B5CBFB);box-shadow:0 1px 0 #9DB3E6"></div>
<svg class="abs" style="left:1265px;top:697px" width="9" height="7" viewBox="0 0 9 7"><path d="M1 1.5L4.5 5 8 1.5" stroke="#4D6185" stroke-width="2.2" fill="none"/></svg>
<div class="abs" style="left:1278px;top:151px;width:2px;height:558px;background:#F3EFE6"></div>

<!-- STATUS BAR -->
<div id="status" class="abs">
  <div class="abs" style="left:0;top:0;width:1280px;height:1px;background:#86847A"></div>
  <div class="abs" style="left:0;top:1px;width:1280px;height:1px;background:#C8C6B8"></div>
  <div class="abs" style="left:0;top:2px;width:1280px;height:21px;background:linear-gradient(#EBE9E0 0,#ECE9DE 8px,#EFE9D8 15px,#E6E5D6 18px,#E2DCC8 19px,#DDD6C3 20px,#E8E4D0 21px)"></div>
  <div class="fit ui" style="left:1.5px;top:7.0px;;transform:scaleX(0.9615)">Done</div>
  <div class="sep" style="left:881px"></div>
  <div class="sep" style="left:905px"></div>
  <div class="sep" style="left:929px"></div>
  <div class="sep" style="left:953px"></div>
  <div class="sep" style="left:977px"></div>
  <div class="sep" style="left:1001px"></div>
  <div class="sep" style="left:1025px"></div>
  <svg class="abs" style="left:1031px;top:3px" width="17" height="18" viewBox="0 0 17 18"><defs><linearGradient id="scr" x1="0" y1="0" x2="0" y2="1"><stop offset="0" stop-color="#C0F4FF"/><stop offset="1" stop-color="#3AB4F0"/></linearGradient><radialGradient id="glb" cx="40%" cy="30%" r="70%"><stop offset="0" stop-color="#40D040"/><stop offset=".5" stop-color="#1A8A30"/><stop offset=".55" stop-color="#1A70D8"/><stop offset="1" stop-color="#0A3AA0"/></radialGradient></defs><ellipse cx="10.2" cy="13.6" rx="5" ry="3.2" fill="#E4E4F4" stroke="#22309A" stroke-width=".9"/><circle cx="4" cy="5.6" r="4.1" fill="url(#glb)"/><rect x="5.4" y="1" width="9.5" height="9.8" fill="url(#scr)" stroke="#1A30A0" stroke-width=".9"/></svg>
  <div class="fit ui" style="left:1050.0px;top:7.0px;;transform:scaleX(0.9848)">Local intranet</div>
  <div class="sep" style="left:1179px"></div>
  <svg class="abs" style="left:1192px;top:4px" width="13" height="14" viewBox="0 0 13 14"><circle cx="5.5" cy="5.5" r="4.5" fill="#fff" stroke="#2F4F9F" stroke-width="1.2"/><path d="M3 5.5h5M5.5 3v5" stroke="#1A44C0" stroke-width="1.6"/><path d="M8.5 8.5l3.5 4" stroke="#7A5A20" stroke-width="2"/></svg>
  <div class="fit ui" style="left:1206.0px;top:7.0px;;transform:scaleX(1.0536)">100%</div>
  <div class="arr" style="left:1250px;top:11px"></div>
  <svg class="abs" style="left:1266px;top:8px" width="12" height="12" viewBox="0 0 12 12"><g fill="#B8B4A4"><rect x="9" y="1" width="2" height="2"/><rect x="5" y="5" width="2" height="2"/><rect x="9" y="5" width="2" height="2"/><rect x="1" y="9" width="2" height="2"/><rect x="5" y="9" width="2" height="2"/><rect x="9" y="9" width="2" height="2"/></g></svg>
</div>
<div class="abs" style="left:0;top:733px;width:1280px;height:1px;background:#2B6CCA"></div>
<div class="abs" style="left:0;top:734px;width:1280px;height:4px;background:linear-gradient(#308BEC,#2F7AE4)"></div>

</body></html>
